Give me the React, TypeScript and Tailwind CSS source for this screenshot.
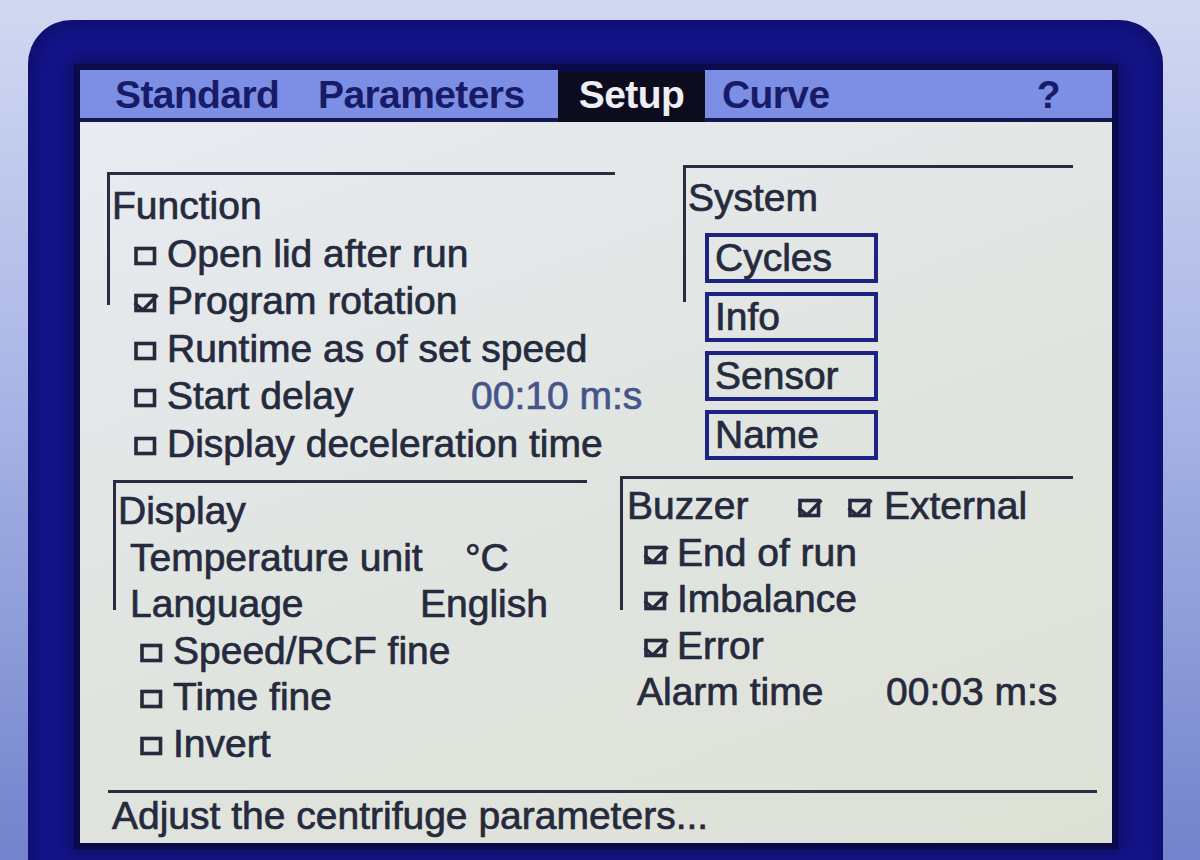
import React from "react";

const line = "bg-[#2a2d3f]";

function Box({ checked = false }: { checked?: boolean }) {
  return (
    <svg viewBox="0 0 26 22" className="w-[26px] h-[22px] shrink-0 inline-block align-baseline">
      <rect x="3" y="3.5" width="18.5" height="15" fill="none" stroke="#262a3d" strokeWidth="3.6" />
      {checked && (
        <path d="M1.5 11 L10 18 L24.5 3" fill="none" stroke="#262a3d" strokeWidth="3.4" />
      )}
    </svg>
  );
}

function CheckRow({
  checked,
  label,
  boxMl,
  labelW,
  value,
  valueCls = "",
}: {
  checked?: boolean;
  label: string;
  boxMl: string;
  labelW?: string;
  value?: string;
  valueCls?: string;
}) {
  return (
    <div className={`flex items-baseline whitespace-nowrap ${boxMl}`}>
      <span className="mr-[8px]">
        <Box checked={checked} />
      </span>
      <span className={labelW}>{label}</span>
      {value && <span className={valueCls}>{value}</span>}
    </div>
  );
}

export default function App() {
  return (
    <div className="w-[1200px] h-[860px] overflow-hidden bg-[linear-gradient(180deg,#d2d8f1_0%,#aab6e6_45%,#7383cc_100%)] font-['Liberation_Sans',Arial,sans-serif]">
      {/* bezel */}
      <div className="ml-[28px] mt-[20px] w-[1135px] h-[900px] rounded-[44px] bg-[#15158c] pt-[50px] pl-[52px] shadow-[inset_0_0_30px_rgba(4,4,60,0.55)]">
        {/* screen */}
        <div className="w-[1032px] h-[773px] flex flex-col shadow-[0_0_0_6px_#0b0b4c,0_0_16px_10px_rgba(6,6,60,0.6)]">
          {/* tabs */}
          <div className="h-[52px] flex items-stretch bg-[#0b0b4c] text-[39px] font-bold tracking-[-0.6px] text-[#181c68] leading-[46px]">
            <div className="w-[218px] pl-[35px] bg-[#7c8fe4] border-b-[4px] border-[#151850] pt-[2px]">Standard</div>
            <div className="w-[260px] pl-[20px] bg-[#7c8fe4] border-b-[4px] border-[#151850] pt-[2px]">Parameters</div>
            <div className="w-[147px] mt-[2px] bg-[#0c0c1e] text-[#eeeef4] text-center">Setup</div>
            <div className="flex-1 flex bg-[#7c8fe4] border-b-[4px] border-[#151850] pt-[2px]">
              <span className="pl-[17px]">Curve</span>
              <span className="ml-auto mr-[52px]">?</span>
            </div>
          </div>

          {/* content */}
          <div className="flex-1 flex flex-col bg-[linear-gradient(160deg,#e8ebf1_0%,#e1e5e2_45%,#dde1d5_100%)] text-[39px] text-[#262a3d] [-webkit-text-stroke:0.7px_currentColor]">
            {/* top row */}
            <div className="h-[354px] flex items-start">
              {/* Function */}
              <div className="mt-[50px] ml-[27px] w-[508px] border-t-[3px] border-[#2a2d3f]">
                <div className="flex">
                  <div className={`w-[3px] h-[130px] shrink-0 ${line}`} />
                  <div className="pt-[7px] pl-[2px] leading-[47.5px]">
                    <div>Function</div>
                    <CheckRow boxMl="ml-[21px]" label="Open lid after run" />
                    <CheckRow boxMl="ml-[21px]" checked label="Program rotation" />
                    <CheckRow boxMl="ml-[21px]" label="Runtime as of set speed" />
                    <CheckRow
                      boxMl="ml-[21px]"
                      label="Start delay"
                      labelW="w-[304px]"
                      value="00:10 m:s"
                      valueCls="text-[#45558c]"
                    />
                    <CheckRow boxMl="ml-[21px]" label="Display deceleration time" />
                  </div>
                </div>
              </div>

              {/* System */}
              <div className="mt-[43px] ml-[68px] w-[390px] border-t-[3px] border-[#2a2d3f]">
                <div className="flex">
                  <div className={`w-[3px] h-[134px] shrink-0 ${line}`} />
                  <div className="pt-[6px] pl-[2px] leading-[47.5px]">
                    <div>System</div>
                    <div className="mt-[11px] ml-[17px] flex flex-col gap-[9px] leading-[40px]">
                      {["Cycles", "Info", "Sensor", "Name"].map((b) => (
                        <div
                          key={b}
                          className="w-[173px] h-[50px] border-[4px] border-[#1d2382] pl-[6px] pt-[1px]"
                        >
                          {b}
                        </div>
                      ))}
                    </div>
                  </div>
                </div>
              </div>
            </div>

            {/* lower row */}
            <div className="h-[314px] flex items-start">
              {/* Display */}
              <div className="mt-[4px] ml-[33px] w-[474px] border-t-[3px] border-[#2a2d3f]">
                <div className="flex">
                  <div className={`w-[3px] h-[127px] shrink-0 ${line}`} />
                  <div className="pt-[5px] pl-[2px] leading-[46.5px] whitespace-nowrap">
                    <div>Display</div>
                    <div className="ml-[12px] flex">
                      <span className="w-[335px]">Temperature unit</span>
                      <span>°C</span>
                    </div>
                    <div className="ml-[12px] flex">
                      <span className="w-[290px]">Language</span>
                      <span>English</span>
                    </div>
                    <CheckRow boxMl="ml-[21px]" label="Speed/RCF fine" />
                    <CheckRow boxMl="ml-[21px]" label="Time fine" />
                    <CheckRow boxMl="ml-[21px]" label="Invert" />
                  </div>
                </div>
              </div>

              {/* Buzzer */}
              <div className="ml-[33px] w-[453px] border-t-[3px] border-[#2a2d3f]">
                <div className="flex">
                  <div className={`w-[3px] h-[131px] shrink-0 ${line}`} />
                  <div className="pt-[4px] pl-[4px] leading-[46.5px] whitespace-nowrap">
                    <div className="flex items-baseline">
                      <span className="w-[170px]">Buzzer</span>
                      <span className="w-[50px]">
                        <Box checked />
                      </span>
                      <span className="mr-[11px]">
                        <Box checked />
                      </span>
                      <span>External</span>
                    </div>
                    <CheckRow boxMl="ml-[16px]" checked label="End of run" />
                    <CheckRow boxMl="ml-[16px]" checked label="Imbalance" />
                    <CheckRow boxMl="ml-[16px]" checked label="Error" />
                    <div className="ml-[10px] flex">
                      <span className="w-[249px]">Alarm time</span>
                      <span>00:03 m:s</span>
                    </div>
                  </div>
                </div>
              </div>
            </div>

            {/* status line */}
            <div className={`ml-[28px] w-[989px] h-[3px] ${line}`} />
            <div className="pl-[32px] leading-[46px] whitespace-nowrap">Adjust the centrifuge parameters...</div>
          </div>
        </div>
      </div>
    </div>
  );
}
